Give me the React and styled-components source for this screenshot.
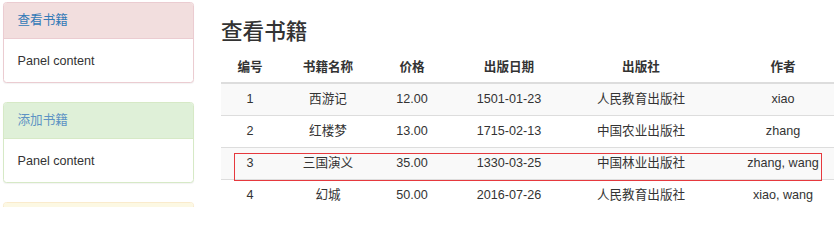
import React from "react";
import styled, { createGlobalStyle } from "styled-components";

const Global = createGlobalStyle`
  html, body { margin: 0; padding: 0; overflow: hidden; background: #fff; }
  body {
    font-family: "Liberation Sans", Arial, "Noto Sans CJK SC", sans-serif;
    font-size: 12.6px;
    color: #333;
  }
  * { box-sizing: border-box; }
`;

const Page = styled.div`
  display: flex;
  align-items: flex-start;
  padding: 2px 0 0 3px;
  width: 834px;
  height: 207px;
  overflow: hidden;
`;

const Sidebar = styled.div`
  width: 191px;
  flex: none;
  display: flex;
  flex-direction: column;
  gap: 19px;
`;

const variants = {
  danger: { bg: "#f2dede", border: "#ebccd1", link: "#337ab7" },
  success: { bg: "#dff0d8", border: "#d6e9c6", link: "#5d93c4" },
  warning: { bg: "#fcf8e3", border: "#faebcc", link: "#337ab7" },
};

const Panel = styled.div`
  border: 1px solid ${(p) => variants[p.$kind].border};
  border-radius: 3.5px;
  background: #fff;
  overflow: hidden;
  box-shadow: 0 1px 1px rgba(0, 0, 0, 0.05);
`;

const PanelHeading = styled.div`
  height: 36px;
  padding: 0 13.5px;
  line-height: 35px;
  background: ${(p) => variants[p.$kind].bg};
  border-bottom: 1px solid ${(p) => variants[p.$kind].border};
`;

const HeadingLink = styled.a`
  color: ${(p) => variants[p.$kind].link};
  text-decoration: none;
  font-size: 12.6px;
`;

const PanelBody = styled.div`
  height: 43px;
  padding: 0 13.5px;
  display: flex;
  align-items: center;
`;

const Main = styled.div`
  position: relative;
  margin-left: 27px;
  flex: 1;
  min-width: 0;
  overflow: hidden;
`;

const Title = styled.h3`
  margin: 18px 0 8px;
  font-size: 21.6px;
  line-height: 24px;
  font-weight: 500;
  color: #333;
  font-family: "Liberation Sans", "Noto Sans CJK SC", sans-serif;
`;

const Table = styled.table`
  width: 634px;
  table-layout: fixed;
  border-collapse: separate;
  border-spacing: 0;
`;

const Th = styled.th`
  padding: 6px 7px;
  line-height: 18px;
  font-weight: bold;
  text-align: center;
  border-bottom: 2px solid #ddd;
  white-space: nowrap;
`;

const Row = styled.tr`
  background: ${(p) => (p.$striped ? "#f9f9f9" : "#fff")};
`;

const Td = styled.td`
  padding: 7px 7px;
  line-height: 17px;
  text-align: center;
  border-bottom: 1px solid #ddd;
  white-space: nowrap;
`;

const Highlight = styled.div`
  position: absolute;
  left: 13px;
  top: 151px;
  width: 588px;
  height: 28px;
  border: 1px solid #e6393e;
  pointer-events: none;
`;

const columns = [
  { label: "编号", width: 58 },
  { label: "书籍名称", width: 98 },
  { label: "价格", width: 70 },
  { label: "出版日期", width: 124 },
  { label: "出版社", width: 140 },
  { label: "作者", width: 144 },
];

const books = [
  ["1", "西游记", "12.00", "1501-01-23", "人民教育出版社", "xiao"],
  ["2", "红楼梦", "13.00", "1715-02-13", "中国农业出版社", "zhang"],
  ["3", "三国演义", "35.00", "1330-03-25", "中国林业出版社", "zhang, wang"],
  ["4", "幻城", "50.00", "2016-07-26", "人民教育出版社", "xiao, wang"],
];

const panels = [
  { kind: "danger", title: "查看书籍", body: "Panel content" },
  { kind: "success", title: "添加书籍", body: "Panel content" },
  { kind: "warning", title: "", body: "" },
];

export default function App() {
  return (
    <>
      <Global />
      <Page>
        <Sidebar>
          {panels.map((p) => (
            <Panel key={p.kind} $kind={p.kind}>
              <PanelHeading $kind={p.kind}>
                {p.title && (
                  <HeadingLink href="#" $kind={p.kind}>
                    {p.title}
                  </HeadingLink>
                )}
              </PanelHeading>
              <PanelBody>{p.body}</PanelBody>
            </Panel>
          ))}
        </Sidebar>
        <Main>
          <Title>查看书籍</Title>
          <Table>
            <colgroup>
              {columns.map((c) => (
                <col key={c.label} style={{ width: c.width }} />
              ))}
            </colgroup>
            <thead>
              <tr>
                {columns.map((c) => (
                  <Th key={c.label}>{c.label}</Th>
                ))}
              </tr>
            </thead>
            <tbody>
              {books.map((b, i) => (
                <Row key={b[0]} $striped={i % 2 === 0}>
                  {b.map((cell, j) => (
                    <Td key={j}>{cell}</Td>
                  ))}
                </Row>
              ))}
            </tbody>
          </Table>
          <Highlight />
        </Main>
      </Page>
    </>
  );
}
